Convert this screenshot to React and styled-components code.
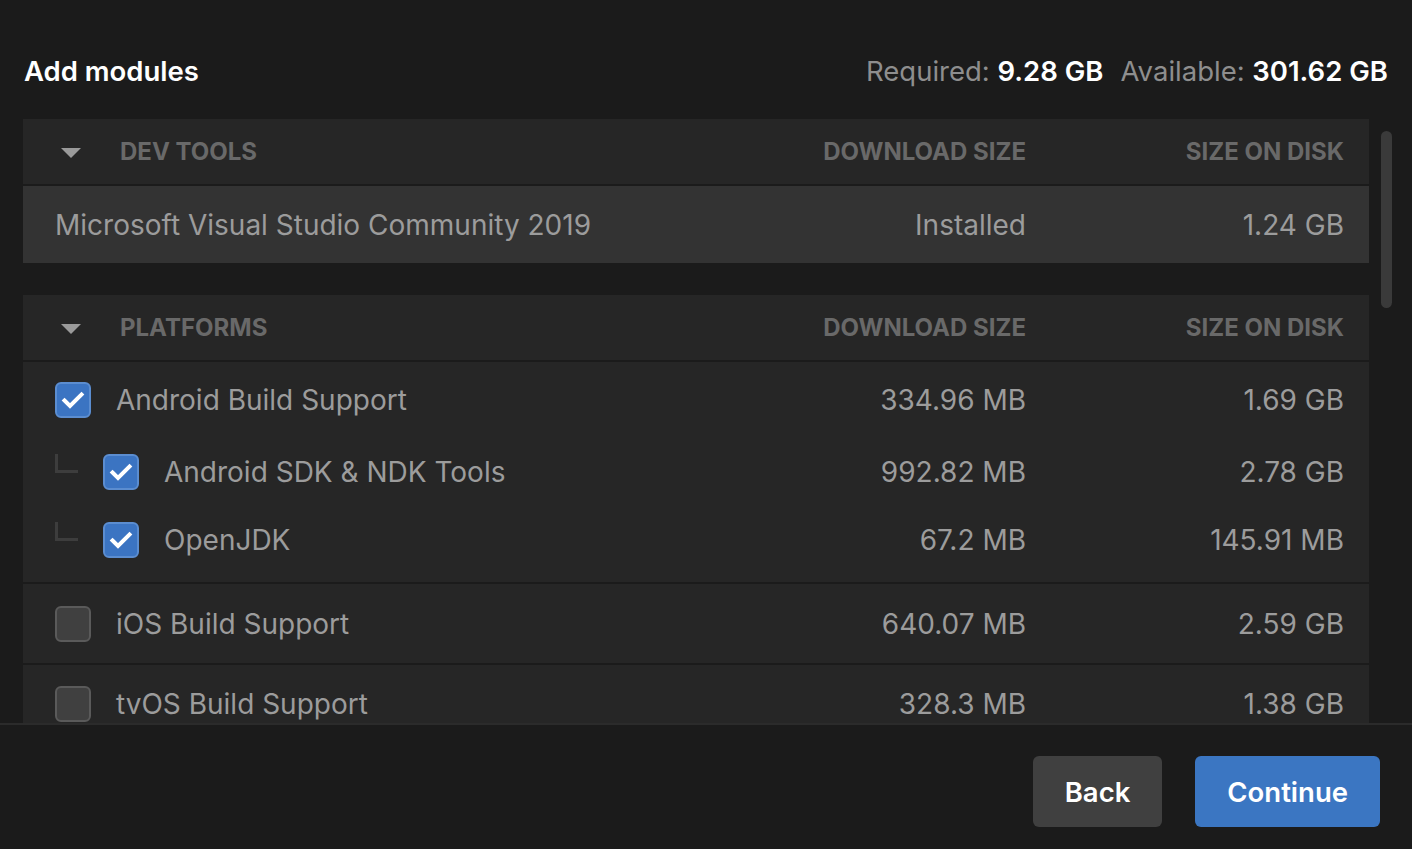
import React from "react";
import styled, { createGlobalStyle } from "styled-components";

const GlobalStyle = createGlobalStyle`
  html, body {
    margin: 0;
    padding: 0;
    background: #1b1b1b;
    font-family: Inter, "Noto Sans", "Liberation Sans", sans-serif;
  }
`;

const Page = styled.div`
  width: 1412px;
  height: 849px;
  display: flex;
  flex-direction: column;
  background: #1b1b1b;
  overflow: hidden;
`;

const TopBar = styled.div`
  height: 119px;
  display: flex;
  align-items: center;
  justify-content: space-between;
  padding: 23px 24px 0 24px;
  box-sizing: border-box;
`;

const Title = styled.h1`
  margin: 0;
  font-size: 27.5px;
  font-weight: 600;
  color: #ffffff;
`;

const Stats = styled.div`
  font-size: 27.5px;
  color: #8e8e8e;
  display: flex;
  gap: 17px;
`;

const Stat = styled.span`
  b {
    color: #ffffff;
    font-weight: 600;
  }
`;

const Body = styled.div`
  flex: 1;
  display: flex;
  padding-left: 23px;
  overflow: hidden;
`;

const List = styled.div`
  width: 1346px;
  display: flex;
  flex-direction: column;
  gap: 32px;
`;

const Card = styled.div`
  background: #262626;
  border-radius: 7px 7px 0 0;
  display: flex;
  flex-direction: column;
`;

const Grid = styled.div`
  display: grid;
  grid-template-columns: 1fr 250px 318px;
  align-items: center;
  padding: 0 25px ${(p) => p.$pb || 0}px 32px;
  box-sizing: border-box;
  height: ${(p) => p.$h}px;
  flex-shrink: 0;
  background: ${(p) => (p.$hl ? "#333333" : "#262626")};
  border-top: ${(p) => (p.$divider ? "2px solid #1b1b1b" : "none")};
`;

const HeadLabel = styled.span`
  font-size: 24px;
  font-weight: 700;
  color: #696969;
  text-transform: uppercase;
  text-align: ${(p) => (p.$right ? "right" : "left")};
`;

const HeadName = styled.div`
  display: flex;
  align-items: center;
  gap: 39px;
  padding-left: 6px;
`;

const Caret = styled.span`
  width: 0;
  height: 0;
  border-left: 10px solid transparent;
  border-right: 10px solid transparent;
  border-top: 10px solid #9a9a9a;
  margin-top: 2px;
`;

const Cell = styled.span`
  font-size: 28px;
  color: #9c9c9c;
  text-align: ${(p) => (p.$right ? "right" : "left")};
  white-space: nowrap;
`;

const NameCell = styled.div`
  display: flex;
  align-items: center;
  gap: 25px;
`;

const Box = styled.span`
  width: 36px;
  height: 36px;
  box-sizing: border-box;
  border-radius: 6px;
  display: flex;
  align-items: center;
  justify-content: center;
  flex-shrink: 0;
  background: ${(p) => (p.$checked ? "#3b74c2" : "#404040")};
  border: 2px solid ${(p) => (p.$checked ? "#5b8dd0" : "#5a5a5a")};
`;

const Tree = styled.span`
  width: 23px;
  height: 19px;
  box-sizing: border-box;
  border-left: 3px solid #3d3d3d;
  border-bottom: 3px solid #3d3d3d;
  margin-top: -18px;
  flex-shrink: 0;
`;

const Track = styled.div`
  width: 11px;
  margin-left: 12px;
  padding-top: 12px;
`;

const Thumb = styled.div`
  height: 177px;
  border-radius: 6px;
  background: #3a3a3a;
`;

const Footer = styled.div`
  height: 126px;
  box-sizing: border-box;
  border-top: 2px solid #2b2b2b;
  display: flex;
  justify-content: flex-end;
  align-items: flex-start;
  gap: 33px;
  padding: 31px 32px 0 0;
  background: #1b1b1b;
`;

const Button = styled.button`
  height: 71px;
  border: none;
  border-radius: 6px;
  padding: 0 32px;
  font-family: inherit;
  font-size: 27.5px;
  font-weight: 600;
  color: #ffffff;
  background: ${(p) => (p.$primary ? "#3b76c2" : "#404040")};
`;

const Check = () => (
  <svg width="28" height="28" viewBox="0 0 28 28">
    <path d="M5.5 14.5l5.5 5.5L22.5 8.5" fill="none" stroke="#fff" strokeWidth="4" strokeLinecap="square" />
  </svg>
);

const Checkbox = ({ checked }) => <Box $checked={checked}>{checked && <Check />}</Box>;

const platforms = [
  { name: "Android Build Support", dl: "334.96 MB", disk: "1.69 GB", checked: true, h: 78 },
  { name: "Android SDK & NDK Tools", dl: "992.82 MB", disk: "2.78 GB", checked: true, child: true, h: 68 },
  { name: "OpenJDK", dl: "67.2 MB", disk: "145.91 MB", checked: true, child: true, h: 76, pb: 8 },
  { name: "iOS Build Support", dl: "640.07 MB", disk: "2.59 GB", checked: false, h: 81, divider: true },
  { name: "tvOS Build Support", dl: "328.3 MB", disk: "1.38 GB", checked: false, h: 80, divider: true },
];

const Header = ({ label }) => (
  <Grid $h={65}>
    <HeadName>
      <Caret />
      <HeadLabel>{label}</HeadLabel>
    </HeadName>
    <HeadLabel $right>Download Size</HeadLabel>
    <HeadLabel $right>Size on Disk</HeadLabel>
  </Grid>
);

export default function App() {
  return (
    <Page>
      <GlobalStyle />
      <TopBar>
        <Title>Add modules</Title>
        <Stats>
          <Stat>
            Required: <b>9.28 GB</b>
          </Stat>
          <Stat>
            Available: <b>301.62 GB</b>
          </Stat>
        </Stats>
      </TopBar>
      <Body>
        <List>
          <Card>
            <Header label="Dev tools" />
            <Grid $h={79} $hl $divider>
              <Cell>Microsoft Visual Studio Community 2019</Cell>
              <Cell $right>Installed</Cell>
              <Cell $right>1.24 GB</Cell>
            </Grid>
          </Card>
          <Card>
            <Header label="Platforms" />
            {platforms.map((p, i) => (
              <Grid key={p.name} $h={p.h} $pb={p.pb} $divider={i === 0 || p.divider}>
                <NameCell>
                  {p.child && <Tree />}
                  <Checkbox checked={p.checked} />
                  <Cell>{p.name}</Cell>
                </NameCell>
                <Cell $right>{p.dl}</Cell>
                <Cell $right>{p.disk}</Cell>
              </Grid>
            ))}
          </Card>
        </List>
        <Track>
          <Thumb />
        </Track>
      </Body>
      <Footer>
        <Button>Back</Button>
        <Button $primary>Continue</Button>
      </Footer>
    </Page>
  );
}
